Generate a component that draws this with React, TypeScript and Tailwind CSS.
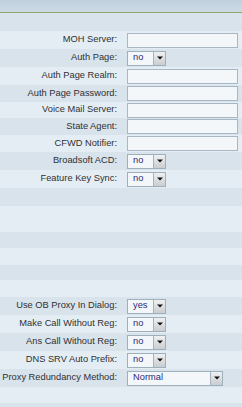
import React from "react";

type Row = {
  h: number;
  dark: boolean;
  label?: string;
  kind?: "text" | "select" | "wide";
  value?: string;
};

const rows: Row[] = [
  { h: 18, dark: true },
  { h: 18, dark: false, label: "MOH Server:", kind: "text" },
  { h: 18, dark: true, label: "Auth Page:", kind: "select", value: "no" },
  { h: 18, dark: false, label: "Auth Page Realm:", kind: "text" },
  { h: 17, dark: true, label: "Auth Page Password:", kind: "text" },
  { h: 16, dark: false, label: "Voice Mail Server:", kind: "text" },
  { h: 17, dark: true, label: "State Agent:", kind: "text" },
  { h: 17, dark: false, label: "CFWD Notifier:", kind: "text" },
  { h: 18, dark: true, label: "Broadsoft ACD:", kind: "select", value: "no" },
  { h: 18, dark: false, label: "Feature Key Sync:", kind: "select", value: "no" },
  { h: 18, dark: true },
  { h: 26, dark: false },
  { h: 16, dark: true },
  { h: 17, dark: false },
  { h: 15, dark: true },
  { h: 17, dark: false },
  { h: 18, dark: true, label: "Use OB Proxy In Dialog:", kind: "select", value: "yes" },
  { h: 18, dark: false, label: "Make Call Without Reg:", kind: "select", value: "no" },
  { h: 18, dark: true, label: "Ans Call Without Reg:", kind: "select", value: "no" },
  { h: 18, dark: false, label: "DNS SRV Auto Prefix:", kind: "select", value: "no" },
  { h: 18, dark: true, label: "Proxy Redundancy Method:", kind: "wide", value: "Normal" },
  { h: 16, dark: false },
  { h: 4, dark: true },
];

function Arrow() {
  return (
    <div className="flex h-full w-[12px] items-center justify-center border-l border-[#a7b2bc] bg-gradient-to-b from-[#f0f0f0] to-[#c9cdd1]">
      <svg width="6" height="4" viewBox="0 0 6 4">
        <path d="M0 0.5 H6 L3 3.5 Z" fill="#111" />
      </svg>
    </div>
  );
}

function Select({ value, wide }: { value: string; wide?: boolean }) {
  return (
    <div
      className={`flex h-[15px] items-stretch border border-[#9fb0bd] bg-[#f4f7fa] ${
        wide ? "w-[96px]" : "w-[39px]"
      }`}
    >
      <div className="flex flex-1 items-center pl-[5px] text-[9.3px] leading-none text-[#2b2a78]">
        {value}
      </div>
      <Arrow />
    </div>
  );
}

export default function App() {
  return (
    <div
      className="h-[407px] w-[242px] overflow-hidden bg-[#e4ecf3]"
      style={{ fontFamily: '"Liberation Sans", Arial, sans-serif' }}
    >
      <div className="h-[12px] bg-gradient-to-b from-[#c0d1de] to-[#ccdae6]" />
      <div className="h-[1px] bg-[#8eab6c]" />
      {rows.map((r, i) => (
        <div
          key={i}
          className={`flex items-center ${r.dark ? "bg-[#d9e3ec]" : "bg-[#e5edf4]"}`}
          style={{ height: r.h }}
        >
          {r.label && (
            <>
              <div className="w-[127px] shrink-0 pr-[10px] text-right text-[9.3px] leading-none text-[#303030] whitespace-nowrap">
                {r.label}
              </div>
              {r.kind === "text" && (
                <div className="h-[15px] w-[111px] border border-[#a8b7c3] bg-[#f4f7fa]" />
              )}
              {r.kind === "select" && <Select value={r.value!} />}
              {r.kind === "wide" && <Select value={r.value!} wide />}
            </>
          )}
        </div>
      ))}
    </div>
  );
}
